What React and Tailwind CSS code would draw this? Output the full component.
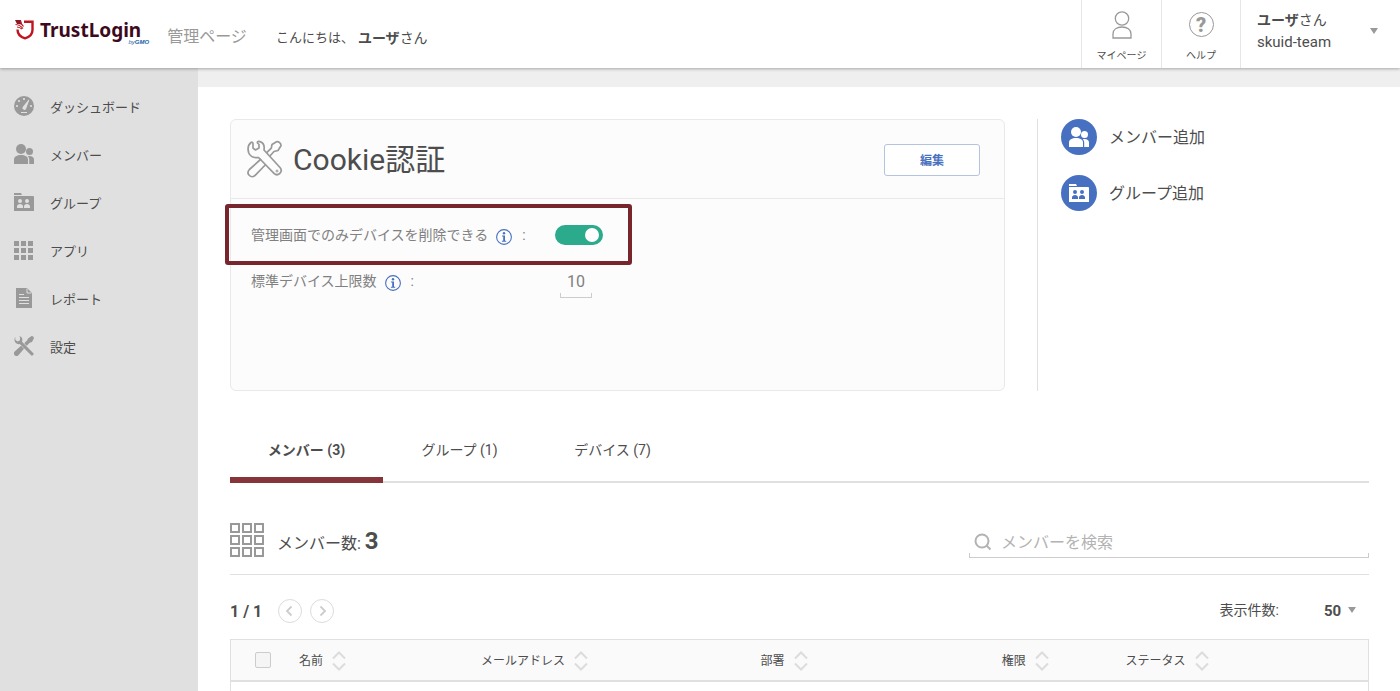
import React from "react";

function UsersShape({ className }) {
  return (
    <svg viewBox="0 0 20 20" className={className} fill="currentColor" aria-hidden="true">
      <circle cx="7" cy="5" r="5" />
      <path d="M0 20v-4.500C0 12.500 3 11 7 11s7 1.500 7 4.500V20z" />
      <circle cx="15.500" cy="7.500" r="3.500" />
      <path d="M13.800 12.200C17.500 11.600 20 13 20 15.500V20h-4.800v-4.500c0-1.400-.5-2.500-1.400-3.300z" />
    </svg>
  );
}

function FolderUsersShape({ className }) {
  return (
    <svg viewBox="0 0 20 20" className={className} fill="currentColor" aria-hidden="true">
      <path d="M0 1h7l1 2H0z" />
      <path
        fillRule="evenodd"
        d="M0 4h19a1 1 0 0 1 1 1v14H0zM6 7a2 2 0 1 0 0 4 2 2 0 0 0 0-4zm7 0a2 2 0 1 0 0 4 2 2 0 0 0 0-4zM3 16h6v-1.500c0-1.500-1.300-2.500-3-2.500s-3 1-3 2.500zm7 0h6v-1.500c0-1.500-1.300-2.500-3-2.500s-3 1-3 2.500z"
      />
    </svg>
  );
}

function GaugeShape({ className }) {
  return (
    <svg viewBox="0 0 20 20" className={className} aria-hidden="true">
      <circle cx="10" cy="10" r="10" fill="currentColor" />
      <g fill="#e0e0e0">
        <circle cx="10" cy="3" r="1.100" />
        <circle cx="5" cy="5" r="1.100" />
        <circle cx="3" cy="10" r="1.100" />
        <circle cx="17" cy="10" r="1.100" />
        <path d="M14.800 3.600l.5.300-3.300 9a1.900 1.900 0 0 1-3.300-1.900z" />
        <rect x="7" y="16" width="6" height="1" />
      </g>
    </svg>
  );
}

function AppsShape({ className }) {
  return (
    <svg viewBox="0 0 20 20" className={className} fill="currentColor" aria-hidden="true">
      <path d="M0 1h5v5H0zM7 1h5v5H7zM14 1h5v5h-5zM0 8h5v5H0zM7 8h5v5H7zM14 8h5v5h-5zM0 15h5v5H0zM7 15h5v5H7zM14 15h5v5h-5z" />
    </svg>
  );
}

function ReportShape({ className }) {
  return (
    <svg viewBox="0 0 20 20" className={className} aria-hidden="true">
      <path d="M2 0h11l5 5v15H2z" fill="currentColor" />
      <path d="M13 0.500V5h4.500" fill="none" stroke="#e0e0e0" />
      <path d="M5 6.500h5M5 9.500h10M5 12.500h10M5 15.500h10" stroke="#e0e0e0" />
    </svg>
  );
}

function ToolsShape({ className }) {
  return (
    <svg viewBox="0 0 20 20" className={className} fill="currentColor" aria-hidden="true">
      <path d="M17.300.2c1-.6 3 1 2.500 2.200L18 6l-2.300.7-3 3-2.400-2.400 3-3L14 2.500z" />
      <path d="M7 9.800l3 3-5.600 6.400a2.350 2.350 0 0 1-3.700-3.700z" />
      <path d="M1.300.8v3l2.200 1.700L6 4.200V1L5 .2C8 .2 9 3 8 5.800l11.600 11.600c.6.800-1.400 2.900-2.200 2.200L5.800 8C2.500 9-1.200 5.500 1.300.8z" />
    </svg>
  );
}

function ToolsOutline({ className }) {
  return (
    <svg viewBox="0 0 36 38" className={className} fill="none" stroke="currentColor" strokeWidth="1.700" strokeLinejoin="round" aria-hidden="true">
      <path d="M4 2.500c1-.9 2 .2 2 1V8l2.500 2 3.500-2V4.500L10.500 3c-.5-1.500 1-2 2.500-1.400 3.500 1.200 4.700 4.400 4 8.400l16 17.500c1.700 2.200 1.200 4.700-.3 6-1.700 1.500-4 1.500-5.700-.2L11.500 17.500C7.500 18 3.500 17 1.800 13 .500 9 1 5 4 2.500z" />
      <path d="M19.500 12.800l4.800-4.600.7-3.700L29.500 1.700c2-.7 4.800 1.800 4.500 4L31 10.500l-4 1-4.300 4.700" />
      <path d="M14 19L2.400 29.500c-1.800 2-1.600 4.500 0 6s4.200 1.600 6-.3L18.700 24.500" />
      <circle cx="30" cy="31" r="1" strokeWidth="1" />
    </svg>
  );
}

function GridOutline({ className }) {
  return (
    <svg viewBox="0 0 34 34" className={className} fill="none" stroke="currentColor" strokeWidth="2" aria-hidden="true">
      <path d="M1 1h8v8H1zM13 1h8v8h-8zM25 1h8v8h-8zM1 13h8v8H1zM13 13h8v8h-8zM25 13h8v8h-8zM1 25h8v8H1zM13 25h8v8h-8zM25 25h8v8h-8z" />
    </svg>
  );
}

function InfoIcon() {
  return (
    <svg viewBox="0 0 16 16" className="mt-1 size-4 text-[#4870c0]" aria-hidden="true">
      <circle cx="8" cy="8" r="7.400" fill="none" stroke="currentColor" strokeWidth="1.100" />
      <circle cx="8" cy="4.200" r="1.200" fill="currentColor" />
      <path d="M6 6.500h3v5.200h1.200v1H5.900v-1h1.300V7.500H6z" fill="currentColor" />
    </svg>
  );
}

function Caret() {
  return (
    <svg viewBox="0 0 8 6" className="h-1.5 w-2 shrink-0 text-[#999]" fill="currentColor" aria-hidden="true">
      <path d="M0 0h8L4 6z" />
    </svg>
  );
}

function Logo() {
  return (
    <a href="#" aria-label="TrustLogin" className="relative flex items-center pr-2">
      <svg viewBox="0 0 20 20" className="size-5" fill="none" aria-hidden="true">
        <path d="M9 1.800h8.500v8.200c0 4-3 7-7.500 8.300C5.500 17 2.500 14 2.500 9.500" stroke="#c0141f" strokeWidth="2.400" />
        <path d="M0 0h6l1 4.500L2 4z" fill="#8c1526" />
        <path d="M5 0c.3 2.500 1 4.500 3.500 6.500M0.500 4.500c3 .2 5.500 1.500 7.500 4M2 7c2 .2 3.500.8 5 2" stroke="#c0141f" strokeWidth="1.100" />
      </svg>
      <span className="ml-[5px] font-['Noto_Sans'] text-[19px] leading-6 font-bold text-[#3d0a1c]">TrustLogin</span>
      <span className="absolute top-5 right-0 font-['Liberation_Sans'] text-[6px] leading-2 font-bold text-[#1a5fa8] italic">
        <span className="font-normal">by</span>GMO
      </span>
    </a>
  );
}

const navItems = [
  { label: "ダッシュボード", Icon: GaugeShape },
  { label: "メンバー", Icon: UsersShape },
  { label: "グループ", Icon: FolderUsersShape },
  { label: "アプリ", Icon: AppsShape },
  { label: "レポート", Icon: ReportShape },
  { label: "設定", Icon: ToolsShape },
];

const columns = [
  { label: "名前", width: "w-[16%]" },
  { label: "メールアドレス", width: "w-[24.6%]" },
  { label: "部署", width: "w-[21.2%]" },
  { label: "権限", width: "w-[10.9%]" },
  { label: "ステータス", width: "" },
];

function Header() {
  return (
    <header className="relative z-10 flex h-[68px] bg-white shadow-[0_1px_3px_rgba(0,0,0,0.3)]">
      <div className="flex flex-1 items-center pl-[15px]">
        <div className="-mt-2">
          <Logo />
        </div>
        <span className="ml-[18px] pt-1.5 text-base text-[#999]">管理ページ</span>
        <p className="ml-[29px] flex items-center pt-2 text-[13px]">
          こんにちは、
          <span className="ml-1 text-sm">
            <b>ユーザ</b>さん
          </span>
        </p>
      </div>
      <a href="#" className="flex w-20 flex-col items-center border-l border-[#e6e6e6] pt-[11px] text-[10px]">
        <svg viewBox="0 0 20 28" className="h-7 w-5 text-[#999]" fill="none" stroke="currentColor" strokeWidth="1.300" aria-hidden="true">
          <circle cx="10" cy="7.500" r="6.700" />
          <path d="M1 27v-4c0-4.500 4-7 9-7s9 2.500 9 7v4z" />
        </svg>
        <span className="mt-[9px] leading-4">マイページ</span>
      </a>
      <a href="#" className="flex w-[79px] flex-col items-center border-l border-[#e6e6e6] pt-3 text-[10px]">
        <span className="flex size-[25px] items-center justify-center rounded-full border border-[#999] text-xl leading-none font-black text-[#999]">?</span>
        <span className="mt-[11px] leading-4">ヘルプ</span>
      </a>
      <button type="button" className="flex w-40 items-center justify-between border-l border-[#e6e6e6] pr-[22px] pb-1.5 pl-4 text-left text-[15px]">
        <span className="leading-[22px]">
          <span className="block text-sm leading-[22px]">
            <b>ユーザ</b>さん
          </span>
          skuid-team
        </span>
        <Caret />
      </button>
    </header>
  );
}

function Sidebar() {
  return (
    <nav className="w-[198px] shrink-0 bg-[#e0e0e0] pt-3.5">
      <ul>
        {navItems.map(({ label, Icon }) => (
          <li key={label}>
            <a href="#" className="flex h-12 items-center gap-4 pl-3.5 text-[13px]">
              <Icon className="size-5 text-[#999]" />
              <span className="pt-[3px]">{label}</span>
            </a>
          </li>
        ))}
      </ul>
    </nav>
  );
}

function SettingsCard() {
  return (
    <section className="h-[272px] flex-1 rounded-md border border-[#e9e9e9] bg-[#fcfcfc]">
      <div className="flex h-[79px] items-center border-b border-[#e9e9e9] pt-0.5 pr-6 pl-4">
        <ToolsOutline className="-mt-0.5 h-[38px] w-9 text-[#999]" />
        <h1 className="ml-2.5 flex-1 text-[30px] leading-9">Cookie認証</h1>
        <button type="button" className="h-8 w-24 rounded-[3px] border border-[#b4c3e0] bg-white pt-0.5 text-xs font-bold text-[#4870c0]">
          編集
        </button>
      </div>
      <div className="pt-[13px] pl-5 text-sm text-[#808080]">
        <div className="relative flex h-[46px] items-center">
          <label htmlFor="admin-only" className="flex w-[304px] items-center gap-2">
            管理画面でのみデバイスを削除できる
            <InfoIcon />
            <span className="pl-0.5">:</span>
          </label>
          <input
            id="admin-only"
            type="checkbox"
            defaultChecked
            className="relative h-5 w-12 appearance-none rounded-full bg-[#ccc] before:absolute before:top-[3px] before:left-[3px] before:size-3.5 before:rounded-full before:bg-white checked:bg-[#2baa8c] checked:before:left-[30px]"
          />
          <div className="pointer-events-none absolute -top-2 -left-[26px] h-[61px] w-[407px] rounded-[3px] border-4 border-[#78262d]" />
        </div>
        <div className="flex h-[46px] items-center">
          <label htmlFor="device-limit" className="flex w-[309px] items-center gap-2">
            標準デバイス上限数
            <InfoIcon />
            <span className="pl-0.5">:</span>
          </label>
          <div className="relative w-8">
            <input id="device-limit" type="text" defaultValue="10" className="h-[33px] w-full bg-transparent text-center text-base outline-none" />
            <span className="pointer-events-none absolute inset-x-0 bottom-0 h-[5px] border border-t-0 border-[#ccc]" />
          </div>
        </div>
      </div>
    </section>
  );
}

function QuickAction({ label, Icon }) {
  return (
    <a href="#" className="flex items-center gap-3 text-base">
      <span className="flex size-9 items-center justify-center rounded-full bg-[#4870c0] text-white">
        <Icon className="size-5" />
      </span>
      <span className="pt-0.5">{label}</span>
    </a>
  );
}

function Tabs() {
  return (
    <div role="tablist" className="mt-8 flex h-[60px] text-sm shadow-[inset_0_-2px_0_#e0e0e0]">
      <button role="tab" aria-selected="true" type="button" className="w-[153px] border-b-6 border-[#863439] font-bold">
        メンバー (3)
      </button>
      <button role="tab" aria-selected="false" type="button" className="w-[153px] border-b-6 border-transparent">
        グループ (1)
      </button>
      <button role="tab" aria-selected="false" type="button" className="w-[153px] border-b-6 border-transparent">
        デバイス (7)
      </button>
    </div>
  );
}

function SearchBar() {
  return (
    <div className="flex h-[92px] items-center justify-between border-b border-[#e0e0e0] pt-[22px]">
      <div className="flex items-center">
        <GridOutline className="size-[34px] text-[#999]" />
        <p className="ml-[13px] pt-0.5 text-base">
          メンバー数: <b className="text-2xl">3</b>
        </p>
      </div>
      <label className="relative flex h-9 w-[400px] items-center pt-1">
        <svg viewBox="0 0 18 18" className="ml-[5px] size-[18px] text-[#b3b3b3]" fill="none" stroke="currentColor" strokeWidth="2" aria-hidden="true">
          <circle cx="8" cy="8" r="6.500" />
          <path d="M12.500 12.500l4 4" />
        </svg>
        <input
          type="search"
          aria-label="メンバーを検索"
          placeholder="メンバーを検索"
          className="ml-[9px] h-8 flex-1 bg-transparent pt-0.5 text-base outline-none placeholder:text-[#b3b3b3]"
        />
        <span className="pointer-events-none absolute inset-x-0 bottom-0 h-[5px] border border-t-0 border-[#ccc]" />
      </label>
    </div>
  );
}

function PagerButton({ label, path }) {
  return (
    <button type="button" aria-label={label} className="flex size-6 items-center justify-center rounded-full border border-[#dcdcdc] text-[#ccc]">
      <svg viewBox="0 0 12 12" className="size-3" fill="none" stroke="currentColor" strokeWidth="1.800" aria-hidden="true">
        <path d={path} />
      </svg>
    </button>
  );
}

function Pagination() {
  return (
    <div className="flex h-16 items-center justify-between pt-2">
      <div className="flex items-center gap-2">
        <span className="mr-2 pt-0.5 text-base font-bold">1 / 1</span>
        <PagerButton label="前へ" path="M7.500 1.500L3 6l4.500 4.500" />
        <PagerButton label="次へ" path="M4.500 1.500L9 6l-4.500 4.500" />
      </div>
      <div className="flex items-center pr-[13px] pb-0.5 text-sm">
        <label htmlFor="page-size">表示件数:</label>
        <select id="page-size" className="ml-[45px] w-6 appearance-none bg-transparent pt-1 text-[15px] font-bold outline-none">
          <option>50</option>
        </select>
        <Caret />
      </div>
    </div>
  );
}

function SortIcon() {
  return (
    <svg viewBox="0 0 14 20" className="h-5 w-3.5 text-[#dcdcdc]" fill="none" stroke="currentColor" strokeWidth="2" aria-hidden="true">
      <path d="M1 7.500l6-6 6 6M1 12.500l6 6 6-6" />
    </svg>
  );
}

function MembersTable() {
  return (
    <div className="flex-1 border border-b-0 border-[#e0e0e0]">
      <table className="w-full table-fixed text-left">
        <thead>
          <tr className="h-[41px] border-b-2 border-[#e0e0e0] bg-[#fafafa]">
            <th className="w-[68px] pl-6">
              <input type="checkbox" aria-label="すべて選択" className="block size-4 appearance-none rounded-[2px] border border-[#ccc] bg-[#f5f5f5]" />
            </th>
            {columns.map(({ label, width }) => (
              <th key={label} className={width}>
                <button type="button" className="flex items-center gap-[9px] pt-0.5 text-xs font-normal">
                  {label}
                  <SortIcon />
                </button>
              </th>
            ))}
          </tr>
        </thead>
      </table>
    </div>
  );
}

export default function App() {
  return (
    <div className="flex min-h-screen flex-col bg-[#efefef] font-[Roboto,'Noto_Sans_CJK_JP',sans-serif] text-[#4d4d4d]" lang="ja">
      <Header />
      <div className="flex flex-1">
        <Sidebar />
        <main className="mt-[19px] flex min-w-0 flex-1 flex-col bg-white pt-8 pr-[31px] pl-8">
          <div className="flex">
            <SettingsCard />
            <aside className="ml-8 flex w-[332px] flex-col gap-5 border-l border-[#e0e0e0] pl-[23px]">
              <QuickAction label="メンバー追加" Icon={UsersShape} />
              <QuickAction label="グループ追加" Icon={FolderUsersShape} />
            </aside>
          </div>
          <Tabs />
          <SearchBar />
          <Pagination />
          <MembersTable />
        </main>
      </div>
    </div>
  );
}
